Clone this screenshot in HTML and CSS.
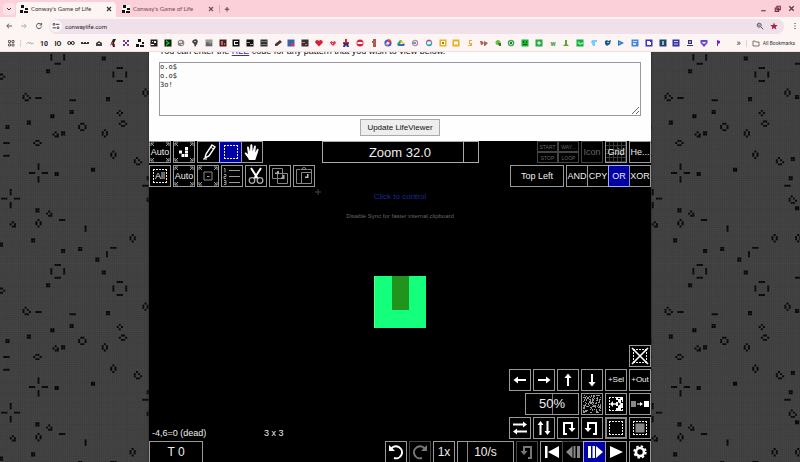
FILE: index.html
```html
<!DOCTYPE html>
<html lang="en">
<head>
<meta charset="utf-8">
<title>Conway's Game of Life</title>
<link rel="stylesheet" href="styles.css">
</head>
<body>
<svg width="0" height="0" class="defs" aria-hidden="true">
  <symbol id="glider" viewBox="0 0 8 8"><path fill="#f4f4f4" d="M0 0h8v8H0z"/><path fill="#111" d="M1 0h3v3H1zM5 3h3v2H5zM0 5h3v3H0zM4 6h4v2H4z"/></symbol>
  <symbol id="close" viewBox="0 0 8 8"><path d="M2 2l4 4M6 2L2 6" stroke="currentColor" stroke-width="1.1"/></symbol>
  <symbol id="corners" viewBox="0 0 20 20"><path d="M1 4V1h3M1 1l3 3M16 1h3v3M19 1l-3 3M1 16v3h3M1 19l3-3M16 19h3v-3M19 19l-3-3" fill="none" stroke="#999"/></symbol>
  <symbol id="select" viewBox="0 0 20 20"><path d="M3 3.500h14M3 16.500h14M3.500 3v14M16.500 3v14" fill="none" stroke="currentColor" stroke-dasharray="2 1"/></symbol>
</svg>

<header class="browser">
  <div class="tabs">
    <button class="chip" aria-label="Search tabs"><svg viewBox="0 0 8 8"><path d="M2 3l2 2 2-2" fill="none" stroke="#333"/></svg></button>
    <button class="tab active"><svg><use href="#glider"/></svg><span>Conway's Game of Life</span><svg><use href="#close"/></svg></button>
    <button class="tab"><svg><use href="#glider"/></svg><span>Conway's Game of Life</span><svg><use href="#close"/></svg></button>
    <button class="new" aria-label="New tab"><svg viewBox="0 0 8 8"><path d="M4 2v4.500M1.800 4.200h4.500" stroke="#5a3d44"/></svg></button>
    <div class="window">
      <button aria-label="Minimize"><svg viewBox="0 0 8 8"><path d="M2 6h4" stroke="#6a3040"/></svg></button>
      <button aria-label="Restore"><svg viewBox="0 0 8 8"><path d="M3.500 2h3v3h-3zM2 3.500h3v3H2z" fill="none" stroke="#7a3040"/></svg></button>
      <button aria-label="Close"><svg viewBox="0 0 8 8"><path d="M2 2l4 4M6 2L2 6" stroke="#5a3040"/></svg></button>
    </div>
  </div>
  <div class="toolbar">
    <button aria-label="Back"><svg viewBox="0 0 8 8"><path d="M7 4H2M4 1.700L1.700 4 4 6.300" fill="none" stroke="#665257"/></svg></button>
    <button aria-label="Forward"><svg viewBox="0 0 8 8"><path d="M1 4h5M4 1.700L6.300 4 4 6.300" fill="none" stroke="#b9a9ad"/></svg></button>
    <button aria-label="Reload"><svg viewBox="0 0 8 8"><path d="M6.200 2.500A2.600 2.600 0 1 0 6.600 4.500M6.600 1v2H4.600" fill="none" stroke="#555"/></svg></button>
    <div class="address">
      <svg class="site" viewBox="0 0 12 12"><circle cx="6" cy="6" r="6" fill="#fff7f8"/><path d="M6 4.300h3.500M2.500 7.800H6" stroke="#444"/><circle cx="4" cy="4.300" r="1" fill="none" stroke="#444"/><circle cx="8" cy="7.800" r="1" fill="none" stroke="#444"/></svg>
      <input type="text" value="conwaylife.com" aria-label="Address">
      <svg viewBox="0 0 8 8"><circle cx="3.200" cy="3.200" r="2" fill="none" stroke="#555"/><path d="M5 5l2.300 2.300M2.200 3.200h2" stroke="#555"/></svg>
      <svg viewBox="0 0 8 8"><path fill="#a32844" d="M4 .5l1 2.400 2.700.2-2 1.800.6 2.600L4 6.100 1.700 7.500l.6-2.600-2-1.800L3 2.900z"/></svg>
    </div>
    <button aria-label="Menu"><svg viewBox="0 0 8 8"><path d="M3.500 1h1v1h-1zM3.500 3.500h1v1h-1zM3.500 6h1v1h-1z" fill="#333"/></svg></button>
  </div>
  <nav class="bookmarks">
    <button aria-label="Apps"><svg viewBox="0 0 8 8"><path d="M1.500 1.500h2v2h-2zM5 1.500h2v2H5zM1.500 5h2v2h-2zM5 5h2v2H5z" fill="none" stroke="#666"/></svg></button>
    <i></i>
    <div id="marks"></div>
    <span class="more">»</span>
    <i></i>
    <button class="all"><svg viewBox="0 0 8 8"><path d="M1 2h2l.7 1H7v4H1z" fill="none" stroke="#555" stroke-width=".8"/></svg>All Bookmarks</button>
  </nav>
</header>

<main>
  <svg class="life" aria-hidden="true">
    <defs>
      <pattern id="field" x="-1" y="-2" width="214" height="214" patternUnits="userSpaceOnUse" viewBox="0 0 100 100">
        <path id="cells" fill="#060606"/>
      </pattern>
      <pattern id="mesh" x="-1" y="-2" width="214" height="214" patternUnits="userSpaceOnUse" viewBox="0 0 100 100">
        <path id="lines" stroke="#3a3a3a" stroke-width=".3"/>
      </pattern>
    </defs>
    <rect width="100%" height="100%" fill="#464646"/>
    <rect width="100%" height="100%" fill="url(#mesh)"/>
    <rect width="100%" height="100%" fill="url(#field)"/>
  </svg>
  <div class="column">
    <section class="page">
      <p>You can enter the <a href="#rle">RLE</a> code for any pattern that you wish to view below.</p>
      <textarea aria-label="Pattern RLE" spellcheck="false">o.o$
o.o$
3o!</textarea>
      <button class="update">Update LifeViewer</button>
    </section>

    <section class="viewer">
      <div class="row">
        <button class="b"><svg><use href="#corners"/></svg><span class="mid">Auto</span></button>
        <button class="b" aria-label="Fit pattern"><svg><use href="#corners"/></svg><svg class="over" viewBox="0 0 20 20"><path fill="#fff" d="M11 5h3v3h-3zM11 8.500h3v3h-3zM11 12h3v3h-3zM7.500 12h3v3h-3zM5 8.500h3v3H5z"/></svg></button>
        <div class="join">
          <button class="b" aria-label="Draw"><svg viewBox="0 0 20 20"><path d="M13 3l3 2-6 9-4 2 1-4z" fill="none" stroke="#fff" stroke-width="1.400"/><path d="M11.500 5l3 2M4 17h4" stroke="#fff"/></svg></button>
          <button class="b on" aria-label="Select"><svg><use href="#select"/></svg></button>
          <button class="b" aria-label="Pan"><svg viewBox="0 0 20 20"><path d="M7 18c-1-3-3-4-4.500-7 1-1 2-.5 3.500 1.200L5 5.500c0-1.500 1.600-1.500 2 0l1 4 .3-6c.1-1.600 2-1.600 2.100 0l.3 6 1.300-5c.4-1.500 2-1.200 1.900.3l-.7 5.700 1.600-3c.8-1.200 2.100-.6 1.700.8-1 3.700-2 6-3.200 9.700z" fill="#fff"/></svg></button>
        </div>
        <button class="zoom" aria-label="Zoom"><span>Zoom 32.0</span></button>
        <div class="quad dim"><button>START</button><button>WAY...</button><button>STOP</button><button>LOOP</button></div>
        <button class="b dim icon">Icon</button>
        <button class="b grid"><span>Grid</span></button>
        <button class="b">He...</button>
      </div>
      <div class="row">
        <button class="b"><svg><use href="#select"/></svg><span class="mid"><em>All</em></span></button>
        <button class="b"><svg><use href="#corners"/></svg><span class="mid">Auto</span></button>
        <button class="b" aria-label="Fit selection"><svg><use href="#corners"/></svg><svg class="over" viewBox="0 0 20 20"><path d="M6 6h8v8H6z" fill="none" stroke="#888"/><path d="M10 10h1.500v1H9v-1z" fill="#aaa"/></svg></button>
        <button class="b" aria-label="List"><svg viewBox="0 0 20 20"><path d="M7 4.500h11M7 10.500h11M7 16.500h11M2 2.500h1v4M2 8.500h2v2H2v2h2M2 14.500h2v4H2M2 16.500h2" fill="none" stroke="#999"/></svg></button>
        <button class="b" aria-label="Cut"><svg viewBox="0 0 20 20"><path d="M5 2l7 11M15 2L8 13" stroke="#fff" stroke-width="2"/><circle cx="6" cy="14.500" r="2.800" fill="none" stroke="#aaa" stroke-width="1.300"/><circle cx="14" cy="14.500" r="2.800" fill="none" stroke="#aaa" stroke-width="1.300"/></svg></button>
        <button class="b" aria-label="Copy"><svg viewBox="0 0 20 20"><path d="M2.500 2.500h10v10h-10zM7.500 7.500h10v10h-10z" fill="none" stroke="#888"/><path d="M7 5h2v3H5V6.500h2zM13 9h1.500v4H11v-1.500h2z" fill="#aaa"/></svg></button>
        <button class="b" aria-label="Paste"><svg viewBox="0 0 20 20"><path d="M6.500 3.500h-4v14h10M13.500 3.500h4v14h-10v-11h10M7 3.500h6M8 3.500a2 2 0 0 1 4 0" fill="none" stroke="#888"/><path d="M13 8h1.500v4H11v-1.500h2z" fill="#bbb"/></svg></button>
        <button class="b wide push">Top Left</button>
        <div class="join modes"><button class="b">AND</button><button class="b">CPY</button><button class="b on">OR</button><button class="b">XOR</button></div>
      </div>

      <div class="stage">
        <svg class="cursor" viewBox="0 0 6 6" aria-hidden="true"><path d="M3 0v6M0 3h6" stroke="#444"/></svg>
        <p class="hint">Click to control</p>
        <p class="note">Disable Sync for faster internal clipboard</p>
        <div class="pattern"><b></b></div>
      </div>

      <div class="row end"><button class="b" aria-label="Clear selection"><svg><use href="#select"/></svg><svg class="over" viewBox="0 0 20 20"><path d="M2 2l16 16M18 2L2 18" stroke="#fff" stroke-width="1.600"/></svg></button></div>
      <div class="row end">
        <button class="b" aria-label="Left"><svg viewBox="0 0 20 20"><path d="M6 10h10" stroke="#fff" stroke-width="2"/><path d="M3.500 10L8 6.500v7z" fill="#fff"/></svg></button>
        <button class="b" aria-label="Right"><svg viewBox="0 0 20 20"><path d="M4 10h10" stroke="#fff" stroke-width="2"/><path d="M16.500 10L12 6.500v7z" fill="#fff"/></svg></button>
        <button class="b" aria-label="Up"><svg viewBox="0 0 20 20"><path d="M10 6v10" stroke="#fff" stroke-width="2"/><path d="M10 3.500L6.500 8h7z" fill="#fff"/></svg></button>
        <button class="b" aria-label="Down"><svg viewBox="0 0 20 20"><path d="M10 4v10" stroke="#fff" stroke-width="2"/><path d="M10 16.500L6.500 12h7z" fill="#fff"/></svg></button>
        <button class="b small">+Sel</button>
        <button class="b small">+Out</button>
      </div>
      <div class="row end">
        <button class="b wide percent">50%</button>
        <button class="b" aria-label="Random"><svg viewBox="0 0 20 20"><path id="noise" fill="#999"/></svg></button>
        <button class="b" aria-label="Random flip"><svg><use href="#select"/></svg><svg class="over" viewBox="0 0 20 20"><path fill="#fff" d="M10 3h2v2h2V3h3v3h-2v3h2v5h-2v3h-5v-3h2v-2h-2v-4h2V6h-2z"/><path d="M6 10h7" stroke="#fff" stroke-width="1.500"/><path fill="#fff" d="M4 10l3-3v6z"/><path fill="#000" d="M14.500 10l-2.500-2v4z"/></svg></button>
        <button class="b" aria-label="Invert"><svg viewBox="0 0 20 20"><path fill="#888" d="M1 7h5v6H1z"/><path fill="#fff" d="M14 7h5v6h-5zM7 9.500h3V8l3 2-3 2v-1.500H7z"/></svg></button>
      </div>
      <div class="row end">
        <div class="status"><span>-4,6=0 (dead)</span><span>3 x 3</span></div>
        <button class="b" aria-label="Flip horizontal"><svg viewBox="0 0 20 20"><path d="M3 6.500h11M6 13.500h11" stroke="#fff" stroke-width="2"/><path d="M17 6.500L13 3.500v6zM3 13.500l4-3v6z" fill="#fff"/></svg></button>
        <button class="b" aria-label="Flip vertical"><svg viewBox="0 0 20 20"><path d="M6.500 6v11M13.500 3v11" stroke="#fff" stroke-width="2"/><path d="M6.500 3l-3 4h6zM13.500 17l-3-4h6z" fill="#fff"/></svg></button>
        <button class="b" aria-label="Rotate clockwise"><svg viewBox="0 0 20 20"><path d="M9 16H6V5h8v5" fill="none" stroke="#fff" stroke-width="2"/><path d="M14 14l-3.500-4h7z" fill="#fff"/></svg></button>
        <button class="b" aria-label="Rotate anticlockwise"><svg viewBox="0 0 20 20"><path d="M11 16h3V5H6v5" fill="none" stroke="#fff" stroke-width="2"/><path d="M6 14l-3.500-4h7z" fill="#fff"/></svg></button>
        <button class="b thick" aria-label="Select border"><svg><use href="#select"/></svg></button>
        <button class="b" aria-label="Select all"><svg><use href="#select"/></svg><svg class="over" viewBox="0 0 20 20"><path d="M5.500 5.500h9v9h-9z" fill="#888"/></svg></button>
      </div>
      <div class="row end last">
        <button class="b wide gen">T 0</button>
        <button class="b" aria-label="Undo"><svg viewBox="0 0 20 20"><path d="M5 7a6 6 0 1 1 3 9" fill="none" stroke="#fff" stroke-width="2"/><path d="M3 3v6h6z" fill="#fff"/></svg></button>
        <button class="b dim" aria-label="Redo"><svg viewBox="0 0 20 20"><path d="M15 7a6 6 0 1 0-3 9" fill="none" stroke="#777" stroke-width="2"/><path d="M17 3v6h-6z" fill="#777"/></svg></button>
        <button class="b big">1x</button>
        <button class="b big rate">10/s</button>
        <button class="b dim" aria-label="Step back"><svg viewBox="0 0 20 20"><path d="M11 16h3V5H7v5" fill="none" stroke="#777" stroke-width="2"/><path d="M7 13l-3.500-4h7z" fill="#777"/></svg></button>
        <div class="join play">
          <button class="b" aria-label="Reset"><svg viewBox="0 0 20 20"><path d="M3 4h2.500v12H3zM17 4v12L6 10z" fill="#fff"/></svg></button>
          <button class="b dim" aria-label="Previous"><svg viewBox="0 0 20 20"><path d="M9.500 4v12L3 10zM10.500 4h2v12h-2zM14 4h3v12h-3z" fill="#888"/></svg></button>
          <button class="b on" aria-label="Next"><svg viewBox="0 0 20 20"><path d="M3 4h3v12H3zM7.500 4h2.500v12H7.500zM11 4v12l7-6z" fill="#fff"/></svg></button>
          <button class="b" aria-label="Play"><svg viewBox="0 0 20 20"><path d="M4 4v12l13-6z" fill="#fff"/></svg></button>
        </div>
        <button class="b" aria-label="Settings"><svg viewBox="0 0 20 20"><circle cx="10" cy="10" r="4" fill="none" stroke="#fff" stroke-width="2.600"/><circle cx="10" cy="10" r="5.800" fill="none" stroke="#fff" stroke-width="1.800" stroke-dasharray="2.400 2.155"/></svg></button>
      </div>
    </section>
  </div>
</main>
<script src="app.js"></script>
</body>
</html>
```
FILE: styles.css
```css
* { box-sizing: border-box; }
body {
  margin: 0;
  height: 100vh;
  display: flex;
  flex-direction: column;
  overflow: hidden;
  font-family: "Liberation Sans", Arial, sans-serif;
  background: #464646;
}
button { padding: 0; border: 0; background: none; color: inherit; font: inherit; }
svg { display: block; flex: none; }
.defs { position: absolute; }

.browser { background: #fdf4f4; color: #333; font-family: Roboto, sans-serif; font-size: 6px; flex: none; }
.browser svg { width: 8px; height: 8px; }
.tabs { display: flex; align-items: center; height: 17px; background: #fbd0d9; padding: 0 4px 0 3px; }
.chip { width: 12px; height: 12px; border-radius: 4px; background: #fde3e8; display: grid; place-items: center; margin-right: 1px; }
.tab { display: flex; align-items: center; gap: 3px; width: 100px; height: 17px; padding: 0 3px 0 4px; color: #6c4b53; font-family: Lato, sans-serif; }
.tab span { flex: 1; text-align: left; white-space: nowrap; }
.tab.active { background: #fdf4f4; border-radius: 4px 4px 0 0; color: #333; margin: 2px 2px 0 0; height: 15px; padding-bottom: 2px; }
.new { border-left: 1px solid #e0a8b4; padding-left: 3px; margin-left: 1px; }
.window { display: flex; gap: 5px; margin-left: auto; }
.window svg { width: 9px; height: 9px; }
.toolbar { display: flex; align-items: center; height: 18px; padding: 0 1px 0 5px; gap: 7px; }
.toolbar > button { flex: none; }
.address { flex: 1; display: flex; align-items: center; gap: 6px; height: 15px; border-radius: 8px; background: #efe0ea; padding: 0 6px 0 1px; }
.address .site { width: 12px; height: 12px; }
.address input { flex: 1; min-width: 0; border: 0; padding: 0; margin-left: -3px; background: none; font: 6px Roboto, sans-serif; color: #222; }
.toolbar > .address { margin-left: -1px; }
.bookmarks { display: flex; align-items: center; height: 17px; padding: 0 5px 0 7px; gap: 4px; border-bottom: 1px solid #f0dfe2; }
.bookmarks i { width: 1px; height: 7px; background: #e8cdd3; }
.bookmarks > i { margin: 0 1px; }
#marks { flex: 1; display: flex; justify-content: space-between; }
.more { font-size: 9px; margin-left: 11px; }
.all { display: flex; align-items: center; gap: 3px; white-space: nowrap; font-size: 5px; }

main { position: relative; flex: 1; min-height: 0; display: flex; justify-content: center; overflow: hidden; }
.life { position: absolute; inset: 0; width: 100%; height: 100%; }
.column { position: relative; width: 100%; max-width: 502px; display: flex; flex-direction: column; box-shadow: 0 0 2px #222; }
.page { background: #fefefe; padding: 0 10px 6px; display: flex; flex-direction: column; align-items: center; }
.page p { margin: -6px 0 6px; align-self: flex-start; font-size: 9px; line-height: 10px; color: #111; white-space: nowrap; }
.page a { color: #33a; }
textarea { width: 100%; height: 54px; padding: 0; margin: 0; border: 1px solid #999; background: #fdfdfd; font: 7px/9px "DejaVu Sans Mono", monospace; color: #222; resize: vertical; }
.update { width: 80px; height: 17px; margin-top: 3px; margin-bottom: -1px; border: 1px solid #aaa; background: #eee; font-size: 8px; color: #111; white-space: nowrap; }

.viewer { flex: 1; background: #000; color: #eee; display: flex; flex-direction: column; gap: 2px; margin-bottom: -1px; }
.row { display: flex; gap: 2px; position: relative; }
.end { justify-content: flex-end; }
.join { display: flex; }
.b { position: relative; flex: none; width: 22px; height: 22px; border: 1px solid #999; background: #000; font-size: 9px; line-height: 20px; white-space: nowrap; text-align: center; overflow: hidden; display: flex; justify-content: center; }
.b svg { width: 20px; height: 20px; }
.b .over, .b .mid { position: absolute; inset: 0; }
.mid em { font-style: normal; background: #000; }
.on { background: #0000a8; border-color: #aaf; }
.dim { color: #666; border-color: #444; }
.small { font-size: 8px; }
.wide { width: 54px; }
.push { margin-left: auto; }
.join .b + .b { margin-left: -1px; }
.join .b { width: 23px; }
.join .b:last-child { width: 22px; }
.modes .b { width: 22px; }
.play .b:nth-child(even) { width: 22px; }
.zoom { width: 157px; height: 22px; border: 1px solid #aaa; font-size: 13px; margin: 0 auto; position: relative; }
.zoom::after { content: ""; position: absolute; top: 0; bottom: 0; right: 14px; width: 1px; background: #aaa; }
.quad { display: grid; grid-template-columns: 21px 21px; grid-template-rows: 11px 11px; font-size: 5px; }
.quad button { border: 1px solid #444; overflow: hidden; }
.grid { background: repeating-linear-gradient(90deg, transparent 0 3px, #383838 3px 4px), repeating-linear-gradient(#000 0 3px, #383838 3px 4px); }
.stage { flex: 1; position: relative; text-align: center; }
.stage p { margin: 0; }
.cursor { position: absolute; left: 33%; top: 0; width: 6px; height: 6px; }
.hint { padding-top: 4px; font-size: 8px; line-height: 8px; color: #182c98; }
.note { padding-top: 10px; font-size: 6px; line-height: 10px; color: #666; }
.pattern { width: 52px; height: 52px; margin: 55px auto 0; background: #14ff7c; border-left: 1px solid #5cff7a; }
.pattern b { display: block; width: 17px; height: 34px; margin: 0 auto; background: #20941c; }
.percent { font-size: 13px; background: linear-gradient(#777, #777) center / 1px 100% no-repeat #000; }
.status { flex: 1; display: flex; align-items: center; padding: 10px 0 0 3px; font-size: 9px; }
.status span:first-child { width: 112px; }
.thick { border: 2px solid #888; }
.thick svg { margin: -1px; }
.gen { margin-right: auto; font-size: 12px; }
.big { font-size: 12px; }
.rate { width: 57px; background: linear-gradient(#888, #888) 9px 0 / 1px 100% no-repeat #000; }
```
FILE: app.js
```js
// Still lifes and oscillators scattered over one 100 x 100 background tile.
const shapes = {
  block: ['11', '11'],
  h: ['111'],
  v: ['1', '1', '1'],
  hiveV: ['010', '101', '101', '010'],
  hiveH: ['0110', '1001', '0110'],
  pond: ['0110', '1001', '1001', '0110'],
  tub: ['010', '101', '010'],
  boat: ['010', '101', '011'],
  loaf: ['0100', '1010', '1001', '0110'],
};
const spots = {
  block: [[49,4],[23,10],[51,23],[34,29],[25,31],[14,34],[4,36],[30,39],[44,56],[27,58],[18,75],[16,89],[1,91],[38,93],[30,94],[46,98],[71,51],[70,60],[73,22],[73,74]],
  h: [[27,6],[27,0],[56,8],[56,14],[18,22],[34,23],[3,43],[3,49],[15,57],[21,57],[68,63],[2,69],[8,69],[29,79],[53,92],[73,6]],
  v: [[24,3],[30,3],[53,11],[59,11],[18,54],[18,60],[5,66],[5,72],[40,83],[50,95]],
  hiveV: [[68,20],[49,39],[53,49],[18,81],[62,88],[73,88]],
  hiveH: [[1,12],[58,34],[18,43]],
  pond: [[39,36]],
  tub: [[56,29]],
  boat: [[26,39],[23,76],[6,81]],
  loaf: [[13,22],[65,52],[71,70]],
};
let d = '';
for (const [name, list] of Object.entries(spots)) {
  const rows = shapes[name];
  for (const [cx, cy] of list) {
    const x0 = cx - Math.floor(rows[0].length / 2);
    const y0 = cy - Math.floor(rows.length / 2);
    rows.forEach((row, j) => [...row].forEach((c, i) => {
      if (c === '1') d += `M${x0 + i} ${y0 + j}h.9v.9h-.9z`;
    }));
  }
}
document.getElementById('cells').setAttribute('d', d);

let mesh = '';
for (let i = 0; i < 100; i++) mesh += `M${i} 0v100M0 ${i}h100`;
document.getElementById('lines').setAttribute('d', mesh);

// Speckle for the random fill button.
let seed = 7, speck = '';
for (let y = 1; y < 19; y++) for (let x = 1; x < 19; x++) {
  seed = (seed * 1103515245 + 12345) % 2147483648;
  if (seed / 2147483648 < 0.4) speck += `M${x} ${y}h1v1h-1z`;
}
document.getElementById('noise').setAttribute('d', speck);

// Bookmark favicons.
const word = (t, c) => `<text x="4" y="6.500" text-anchor="middle" font-size="7" font-weight="700" fill="${c}">${t}</text>`;
const p = (c, path) => `<path fill="${c}" d="${path}"/>`;
const tile = (c, inner, path) => p(c, 'M.5.500h7v7h-7z') + p(inner, path);
const ring = (c, w) => `<circle cx="4" cy="4" r="2.600" fill="none" stroke="${c}" stroke-width="${w}"/>`;
const heart = 'M4 7.500L.3 3.800C-.3 1 3 0 4 2c1-2 4.300-1 3.700 1.800z';
const glider = p('#111', 'M2 0h3v3H2zM6 3h2v2H6zM0 5h3v3H0zM4 6h4v2H4z');
const marks = [
  `<path d="M.5 5L2.500 3l1 2" fill="none" stroke="#e99" /><path d="M4 3l1.500 2 2-1" fill="none" stroke="#7b8"/>`,
  word('10', '#222'), word('IO', '#222'),
  `<circle cx="2.200" cy="4" r="1.500" fill="none" stroke="#222"/><circle cx="5.800" cy="4" r="1.500" fill="none" stroke="#222"/>`,
  p('#333', 'M0 3h2v2H0zM3 3h2v2H3zM6 3h2v2H6zM1 4h6v1H1z'),
  p('#444', 'M1 4l3-2 3 2v3H1z') + p('#ddd', 'M3 4h2v1H3z'),
  p('#222', 'M4 0h3L5 4l1 4H4L3 5 1 7z') + p('#d33', 'M2 3h2v2H2zM5 5h1v2H5z'),
  p('#d24', 'M1 1h2v2H1zM5 5h2v2H5z') + p('#34c', 'M5 1h2v2H5zM1 5h2v2H1zM3 3h2v2H3z'),
  glider,
  tile('#222', '#eee', 'M2 2h1v1H2zM4 2h2v2H4zM1 5h3v1H1z'),
  tile('#071a07', '#1c2', 'M2 1l4 3-4 3V5l2-1-2-1z'),
  `<circle cx="4" cy="4" r="3.300" fill="#888"/>` + p('#ddd', 'M2 2h3v2H2zM4 5h2v1H4z'),
  p('#444', 'M2 1l3-1 2 2-1 3-2 3-1-3-2-2z') + p('#bbb', 'M3 2h2v1H3z'),
  tile('#999', '#666', 'M1 4l2-1 2 2 2-1v3H1z'),
  tile('#422', '#d55', 'M2 2h2v4H2zM5 4h1v2H5z'),
  tile('#111', '#eee', 'M2 2h4v1H3v2h3v1H2z'),
  tile('#111', '#9ab', 'M1 3h3v1H1zM4 5h3v1H4z'),
  tile('#333', '#777', 'M1 2h6v1H1zM1 5h6v1H1z'),
  p('#533', 'M1 5l5-4 2 2-5 4H1z'),
  tile('#36a', '#d35', 'M4 4h3v3H4z'),
  tile('#333', '#e57', 'M1 3h3v1H1zM4 5h2v1H4z'),
  p('#d8203c', heart),
  p('#e8304c', 'M4 7L1 4l1-2 2 1 2-1 1 2z') + p('#fcc', 'M3 4h1v1H3z'),
  p('#d22', 'M3 0h2v3H3zM1 3h6v2H1z') + p('#22387c', 'M2 4h4l1 4H5L4 6 3 8H1z'),
  `<circle cx="4" cy="4" r="3.500" fill="#d8243c"/>` + p('#fff', 'M1.500 3h5v2h-5z'),
  p('#964', 'M3 0h3v8H3z') + p('#d46', 'M2 2h4v2H2z'),
  ring('#45d', 2) + p('#e43', 'M4 0l3 1-1 3-2-1z') + p('#fb2', 'M1 5l2-1 1 3z'),
  p('#2a6', 'M3 1h2L3 5 1 7 0 5z') + p('#fb2', 'M4 1l4 4H6L3 2z') + p('#36d', 'M2 5h6L7 7H1z'),
  ring('#a8b', 1.2) + p('#6a8', 'M2 3h3v2H2z'),
  ring('#39e', 1.2) + p('#e43', 'M1 2l3-1.500 2 1-2 1z') + p('#3a5', 'M2 6l4-1v1L4 7z'),
  tile('#eab020', '#fff', 'M2 2h4v4H2z') + p('#a70', 'M3 3h2v2H3z'),
  tile('#eab020', '#fff', 'M2 2.500h4v3H2z'),
  p('#ea3', 'M3 1h3v1H4v2h2v3H2V6h2V5H3z'),
  p('#a65', 'M0 2h2l2 2-2 2H1zM4 2l4 2-3 3H4z'),
  `<circle cx="4" cy="3.500" r="2.500" fill="#7b4"/>` + p('#374', 'M4 4h3v3H5z'),
  ring('#4a5', 1.5) + p('#273', 'M3 3h2v2H3z'),
  tile('#1b3', '#052', 'M2 2h1v2H2zM5 2h1v2H5zM2 5h4v1H2z'),
  tile('#2a4', '#fff', 'M3.500 2h1v1.500H6v1H4.500V6h-1V4.500H2v-1h1.500z'),
  word('w', '#394'),
  p('#5a3', 'M3 1h2v4l2 2H1l2-2z'),
  tile('#1a4', '#7e8', 'M1 4l2-2 1 2 3-1v2L4 6z'),
  p('#7cf', 'M2 1h5v2H5v4H3L1 3z'),
  p('#258', 'M1 2l2-1 1 1 3-1-1 4-3 2-2-2z') + p('#9cf', 'M3 3h2v1H3z'),
  p('#27c', 'M1 1l6 3-6 3z') + p('#9cf', 'M2 3l2 1-2 1z'),
  tile('#48d', '#cdf', 'M2 2h4v1H2zM2 4h3v2H2z'),
  tile('#33c', '#fff', 'M2 2h3v1h1v3H2z'),
  tile('#246', '#8bd', 'M3 2h2v4H3z'),
  tile('#33a', '#cce', 'M2 2h4v1H2zM2 4.500h4v1H2z'),
  p('#336', 'M2 1h4v4H2zM1 6h6v1H1z') + p('#9ae', 'M3 2h2v2H3z'),
  p('#64d', 'M.5 1h7v3L4 8 .5 4z') + p('#fff', 'M2.500 3h3v1.500h-3z'),
  p('#72d', 'M3 1l3 1v2L4 5v2H3z'),
];
document.getElementById('marks').innerHTML = marks
  .map((m, i) => `<a href="#mark-${i + 1}" aria-label="Bookmark ${i + 1}"><svg viewBox="0 0 8 8">${m}</svg></a>`)
  .join('');
```
